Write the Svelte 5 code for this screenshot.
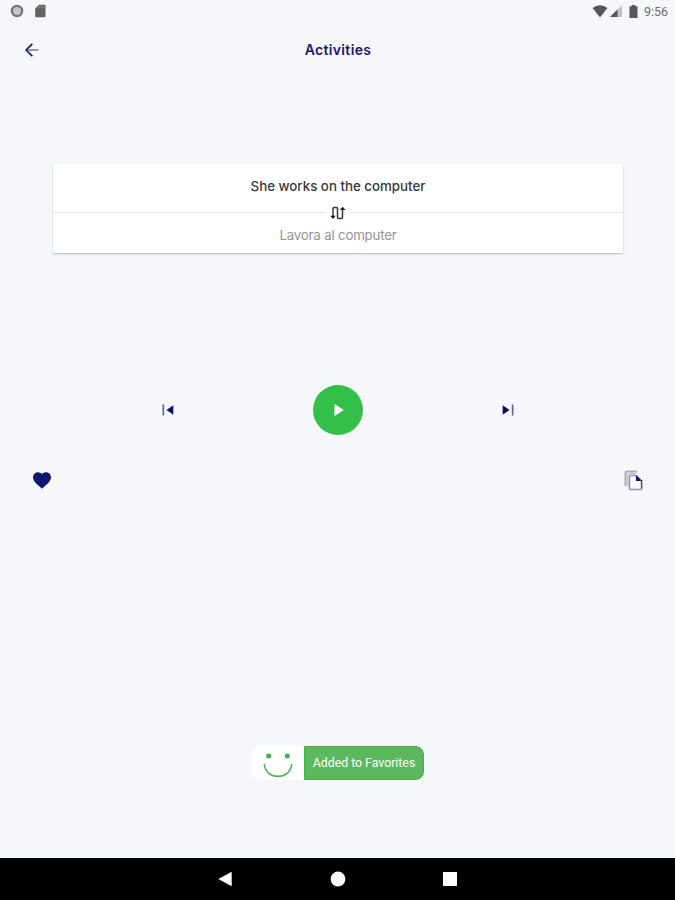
<script lang="ts">
	export let title = 'Activities';
	export let time = '9:56';
	export let phrase = 'She works on the computer';
	export let translation = 'Lavora al computer';
	export let toast = 'Added to Favorites';

	let swapped = false;

	function swap(){
		swapped = !swapped;
	}
</script>

<div class="screen">
	<div class="status">
		<svg class="sync" width="14" height="14" viewBox="0 0 14 14">
			<circle cx="7" cy="7" r="5.1" fill="#c4c5c8" stroke="#747577" stroke-width="2.3" />
		</svg>
		<svg width="11" height="14" viewBox="0 0 11 14">
			<path d="M4 .7h5.5q1 0 1 1v10.5q0 1-1 1h-8.500q-.8 0-.8-1V4.500z" fill="#626365" />
			<path d="M4.300 2v2.200M6.300 2v2.200M8.300 2v2.200" stroke="#96979a" stroke-width=".8" />
		</svg>
		<span class="fill"></span>
		<svg class="wifi" width="16" height="13" viewBox="0 0 16 13">
			<path d="M.5 3Q8-2.500 15.500 3L8 12.500z" fill="#56575a" />
		</svg>
		<svg class="signal" width="12" height="12" viewBox="0 0 12 12">
			<path d="M12 0v12H0z" fill="#c3c4c7" />
			<path d="M7.500 4.500V12H0z" fill="#56575a" />
		</svg>
		<svg class="battery" width="9" height="13" viewBox="0 0 9 13">
			<path d="M2.700 0h3.600v1.300H8.500V13H.5V1.300h2.200z" fill="#56575a" />
		</svg>
		<span class="time">{time}</span>
	</div>

	<header>
		<button aria-label="Back">
			<svg width="14" height="14" viewBox="0 0 14 14" fill="none">
				<path d="M1 7h12.500" stroke="#8582ae" stroke-width="1.700" />
				<path d="M7.300 .8L1.100 7l6.200 6.200" stroke="#19127a" stroke-width="1.700" />
			</svg>
		</button>
		<h1>{title}</h1>
	</header>

	<div class="card">
		<p class="phrase">{swapped ? translation : phrase}</p>
		<div class="divider">
			<button aria-label="Swap" on:click={swap}>
				<svg width="16" height="14" viewBox="0 0 16 14" fill="none">
					<path d="M3 11V2.500Q3 1.500 4 1.500H6.500Q7.500 1.500 7.500 2.500V11.500Q7.500 12.500 8.500 12.500H11.500Q12.500 12.500 12.500 11.500V3" stroke="#38383a" stroke-width="1.500" />
					<path d="M.3 9.700h5.400L3 13zM9.800 4h5.700L12.600 .8z" fill="#161618" />
				</svg>
			</button>
		</div>
		<p class="translation">{swapped ? phrase : translation}</p>
	</div>

	<div class="controls">
		<button aria-label="Previous">
			<svg width="12" height="12" viewBox="0 0 12 12">
				<path d="M.5 .5H2.200v11H.5z" fill="#69669b" />
				<path d="M11.300 1.200v9.600L4.500 6z" fill="#110966" />
			</svg>
		</button>
		<button class="play" aria-label="Play">
			<svg width="10" height="12" viewBox="0 0 10 12"><path d="M.5 0v12L9.800 6z" fill="#fff" /></svg>
		</button>
		<button aria-label="Next">
			<svg width="12" height="12" viewBox="0 0 12 12">
				<path d="M9.800 .5h1.700v11H9.800z" fill="#69669b" />
				<path d="M.7 1.200v9.600L7.500 6z" fill="#110966" />
			</svg>
		</button>
	</div>

	<div class="actions">
		<button aria-label="Favorite">
			<svg width="18" height="17" viewBox="2 3 20 18.350">
				<path d="M12 21.350l-1.450-1.320C5.400 15.360 2 12.280 2 8.500 2 5.420 4.420 3 7.500 3c1.740 0 3.410.81 4.500 2.090C13.090 3.810 14.760 3 16.500 3 19.580 3 22 5.420 22 8.500c0 3.780-3.400 6.860-8.550 11.540z" fill="#0e1670" />
			</svg>
		</button>
		<button aria-label="Copy">
			<svg width="19" height="21" viewBox="0 0 19 21" fill="none">
				<path d="M1.500 16V3Q1.500 1.500 3 1.500H13" stroke="#adadbf" stroke-width="2" />
				<path d="M3.700 16V5Q3.700 3.500 5 3.500H12" stroke="#c4c4d0" stroke-width="1.500" />
				<path d="M12 5.500H6.500Q5.500 5.500 5.500 6.500V18.500Q5.500 19.500 6.500 19.500H16.500Q17.500 19.500 17.500 18.500V10" fill="#fcfcfe" stroke="#9291ad" stroke-width="1.500" />
				<path d="M12 4.700L18.300 11H12z" fill="#160c73" />
				<path d="M17.600 10v8.500" stroke="#4b4588" stroke-width="1.300" />
			</svg>
		</button>
	</div>

	<div class="toast">
		<div class="face">
			<svg width="30" height="26" viewBox="0 0 30 26">
				<circle cx="5.700" cy="3" r="2.500" fill="#43ad48" />
				<circle cx="24.300" cy="3" r="2.500" fill="#43ad48" />
				<path d="M1.300 11C2.500 27.500 27.500 27.500 28.700 11" fill="none" stroke="#50b354" stroke-width="1.600" />
			</svg>
		</div>
		<div class="message">{toast}</div>
	</div>

	<nav>
		<svg width="14" height="16" viewBox="0 0 14 16"><path d="M.3 8L13.700 .7v14.600z" fill="#fff" /></svg>
		<svg width="16" height="16" viewBox="0 0 16 16"><circle cx="8" cy="8" r="7.400" fill="#fff" /></svg>
		<svg width="14" height="14" viewBox="0 0 14 14"><path d="M0 0h14v14H0z" fill="#fff" /></svg>
	</nav>
</div>

<style>
	:global(body){
		margin: 0;
		background: #f5f7fb;
	}
	.screen{
		display: flex;
		flex-direction: column;
		width: 675px;
		height: 900px;
		background: #f5f7fb;
		font-family: Inter, "Liberation Sans", sans-serif;
	}
	svg{
		display: block;
		flex: none;
	}
	button{
		display: flex;
		align-items: center;
		justify-content: center;
		padding: 0;
		border: 0;
		background: none;
		cursor: pointer;
	}
	.status{
		display: flex;
		align-items: center;
		height: 22px;
		padding: 0 6px 0 10px;
	}
	.sync{
		margin-right: 11px;
	}
	.fill{
		flex: 1;
	}
	.wifi{
		margin-right: 2px;
	}
	.signal{
		margin-right: 7px;
	}
	.battery{
		margin-right: 6px;
	}
	.time{
		width: 25px;
		color: #6d6e71;
		font: 12.500px/23px Roboto, sans-serif;
		white-space: nowrap;
	}
	header{
		display: grid;
		grid-template-columns: 50px 1fr 50px;
		align-items: center;
		height: 55px;
		padding: 0 7px;
	}
	h1{
		margin: 0 0 0 1px;
		color: #1a1670;
		font-size: 14px;
		font-weight: 600;
		letter-spacing: .35px;
		line-height: 20px;
		text-align: center;
	}
	.card{
		height: 89px;
		margin: 87px 52px 0 53px;
		background: #fff;
		border-radius: 1px;
		box-shadow: 0 1px 2px rgba(0,0,0,.25);
	}
	.card p{
		margin: 0;
		text-align: center;
	}
	.card .phrase{
		height: 42px;
		color: #38383b;
		font-size: 13.300px;
		font-weight: 500;
		line-height: 45px;
	}
	.divider{
		display: flex;
		align-items: center;
		gap: 5px;
		height: 13px;
	}
	.divider::before, .divider::after{
		content: '';
		flex: 1;
		height: 1px;
		background: #e5e5e7;
	}
	.card .translation{
		color: #949496;
		font-size: 13.300px;
		letter-spacing: -.2px;
		line-height: 33px;
	}
	.controls{
		display: grid;
		grid-template-columns: repeat(3, 170px);
		justify-content: center;
		justify-items: center;
		align-items: center;
		height: 50px;
		margin: 132px 0 0 1px;
	}
	.play{
		width: 50px;
		height: 50px;
		border-radius: 50%;
		background: #34bf49;
	}
	.play svg{
		margin-left: 2px;
	}
	.actions{
		display: flex;
		align-items: center;
		justify-content: space-between;
		height: 22px;
		margin-top: 34px;
		padding: 0 32px 0 33px;
	}
	.toast{
		display: flex;
		align-self: center;
		width: 172px;
		height: 34px;
		margin: 255px 0 0 1px;
		overflow: hidden;
		border-radius: 8px;
		background: #fff;
	}
	.face{
		display: flex;
		align-items: center;
		justify-content: center;
		width: 52px;
		padding-top: 5px;
	}
	.message{
		box-sizing: border-box;
		flex: 1;
		border: 1px solid #43ad48;
		border-radius: 0 8px 8px 0;
		background: #5cb85c;
		color: #fff;
		font: 12.300px/33px Roboto, sans-serif;
		text-align: center;
		white-space: nowrap;
	}
	nav{
		display: grid;
		grid-template-columns: repeat(3, 112.500px);
		justify-content: center;
		justify-items: center;
		align-items: center;
		height: 42px;
		margin-top: auto;
		background: #000;
	}
</style>
